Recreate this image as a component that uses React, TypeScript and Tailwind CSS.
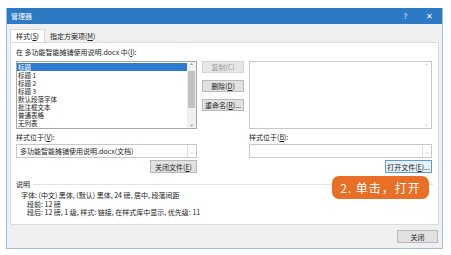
import React from "react";

const FONT = { fontFamily: '"Noto Sans CJK SC", "Noto Sans", sans-serif' };

const STYLES = ["标题", "标题 1", "标题 2", "标题 3", "默认段落字体", "批注框文本", "普通表格", "无列表"];

function Btn({
  children,
  disabled,
  focused,
  className = "",
}: {
  children: React.ReactNode;
  disabled?: boolean;
  focused?: boolean;
  className?: string;
}) {
  return (
    <div
      className={
        "flex items-center justify-center text-[7px] leading-[10px] " +
        (focused
          ? "border border-[#5a9ad8] bg-[#e5f1fb] text-[#222]"
          : disabled
            ? "border border-[#d6d6d6] bg-[#e6e6e6] text-[#9a9a9a]"
            : "border border-[#b9b9b9] bg-[#e1e1e1] text-[#222]") +
        " " +
        className
      }
    >
      {children}
    </div>
  );
}

function Combo({ value }: { value?: string }) {
  return (
    <div className="flex h-[14px] items-center border border-[#c8c8c8] bg-white">
      <span className="flex-1 whitespace-nowrap pl-[3px] text-[7px] leading-[12px] text-[#222]">{value}</span>
      <span className="flex h-full w-[9px] items-center justify-center border-l border-[#e0e0e0] text-[6px] text-[#888]">
        ⌵
      </span>
    </div>
  );
}

export default function App() {
  return (
    <div className="relative h-[255px] w-[451px] overflow-hidden bg-white pl-[6px] pt-[8px]" style={FONT}>
      <div className="flex h-[241px] w-[437px] flex-col border border-t-0 border-[#9cc0e6] bg-[#f0f0f0]">
        {/* title bar */}
        <div className="flex h-[16px] items-center bg-[#2b7ac3] px-[4px] text-white">
          <span className="flex-1 text-[7px] leading-[10px]">管理器</span>
          <span className="mr-[19px] text-[7px] leading-[10px]">?</span>
          <span className="mr-[5px] text-[8px] leading-[10px]">✕</span>
        </div>

        {/* tabs */}
        <div className="flex h-[18px] items-end pl-[3px]">
          <div className="flex h-[13px] items-center border border-b-0 border-[#d9d9d9] bg-white px-[5px] text-[7px] leading-[10px] text-[#222]">
            样式(<span className="underline">S</span>)
          </div>
          <div className="flex h-[12px] items-center px-[5px] text-[7px] leading-[10px] text-[#222]">
            指定方案项(<span className="underline">M</span>)
          </div>
        </div>

        {/* panel */}
        <div className="mx-[3px] flex h-[183px] flex-col border border-[#dcdcdc] bg-white pl-[5px] pr-[5px] pt-[4px]">
          <div className="h-[10px] text-[7px] leading-[10px] text-[#222]">
            在 多功能智能摊铺使用说明.docx 中(<span className="underline">I</span>):
          </div>

          <div className="mt-[4px] grid grid-cols-[181px_52px_183px] grid-rows-[68px_13px_14px_13px] gap-y-[1px]">
            {/* left list */}
            <div className="flex overflow-hidden border border-[#a8a8a8] bg-white">
              <div className="flex flex-1 flex-col pt-[1px]">
                {STYLES.map((s, i) => (
                  <span
                    key={s}
                    className={
                      "shrink-0 pl-[1px] text-[6.5px] leading-[8px] " +
                      (i === 0 ? "bg-[#2f7bd0] text-white" : "text-[#222]")
                    }
                  >
                    {s}
                  </span>
                ))}
              </div>
              <div className="flex w-[9px] flex-col items-center bg-[#f0f0f0]">
                <span className="h-[8px] text-[6px] leading-[8px] text-[#555]">⌃</span>
                <div className="mt-[1px] h-[37px] w-[7px] bg-[#c1c1c1]" />
                <span className="mt-auto h-[8px] text-[6px] leading-[8px] text-[#555]">⌄</span>
              </div>
            </div>

            {/* middle buttons */}
            <div className="flex flex-col gap-[7px] pl-[5px]">
              <Btn disabled className="h-[12px] w-[42px]">
                复制(C)
              </Btn>
              <Btn className="h-[12px] w-[42px]">
                删除(<span className="underline">D</span>)
              </Btn>
              <Btn className="h-[12px] w-[42px]">
                重命名(<span className="underline">R</span>)...
              </Btn>
            </div>

            {/* right list */}
            <div className="flex border border-[#c8c8c8] bg-white">
              <div className="flex-1" />
              <div className="flex w-[9px] flex-col items-center">
                <span className="h-[8px] text-[6px] leading-[8px] text-[#bbb]">⌃</span>
                <span className="mt-auto h-[8px] text-[6px] leading-[8px] text-[#bbb]">⌄</span>
              </div>
            </div>

            <div className="pt-[2px] text-[7px] leading-[10px] text-[#222]">
              样式位于(<span className="underline">V</span>):
            </div>
            <div />
            <div className="pt-[2px] text-[7px] leading-[10px] text-[#222]">
              样式位于(<span className="underline">B</span>):
            </div>

            <Combo value="多功能智能摊铺使用说明.docx(文档)" />
            <div />
            <Combo />

            <div className="flex justify-end pt-[1px]">
              <Btn className="h-[13px] w-[47px]">
                关闭文件(<span className="underline">E</span>)
              </Btn>
            </div>
            <div />
            <div className="flex justify-end pt-[1px]">
              <Btn focused className="h-[13px] w-[47px]">
                打开文件(<span className="underline">E</span>)...
              </Btn>
            </div>
          </div>

          {/* description */}
          <div className="mt-[7px] flex items-center gap-[3px]">
            <span className="text-[7px] leading-[10px] text-[#222]">说明</span>
            <div className="h-px flex-1 bg-[#e3e3e3]" />
          </div>
          <div className="mt-[2px] flex flex-col pl-[5px] text-[7px] leading-[8.5px] text-[#222]">
            <span>字体: (中文) 黑体, (默认) 黑体, 24 磅, 居中, 段落间距</span>
            <span className="pl-[6px]">段前: 12 磅</span>
            <span className="pl-[6px]">段后: 12 磅, 1 级, 样式: 链接, 在样式库中显示, 优先级: 11</span>
          </div>
        </div>

        {/* footer */}
        <div className="flex flex-1 items-center justify-end pr-[4px]">
          <Btn className="h-[13px] w-[41px] border-[#6b9ed1]">关闭</Btn>
        </div>
      </div>

      {/* callout */}
      <div className="absolute left-[332px] top-[176px] flex h-[23px] w-[97px] items-center justify-center rounded-[7px] bg-[#e86f25] text-[12px] leading-[14px] tracking-[1px] text-white">
        2. 单击，打开
      </div>
    </div>
  );
}
